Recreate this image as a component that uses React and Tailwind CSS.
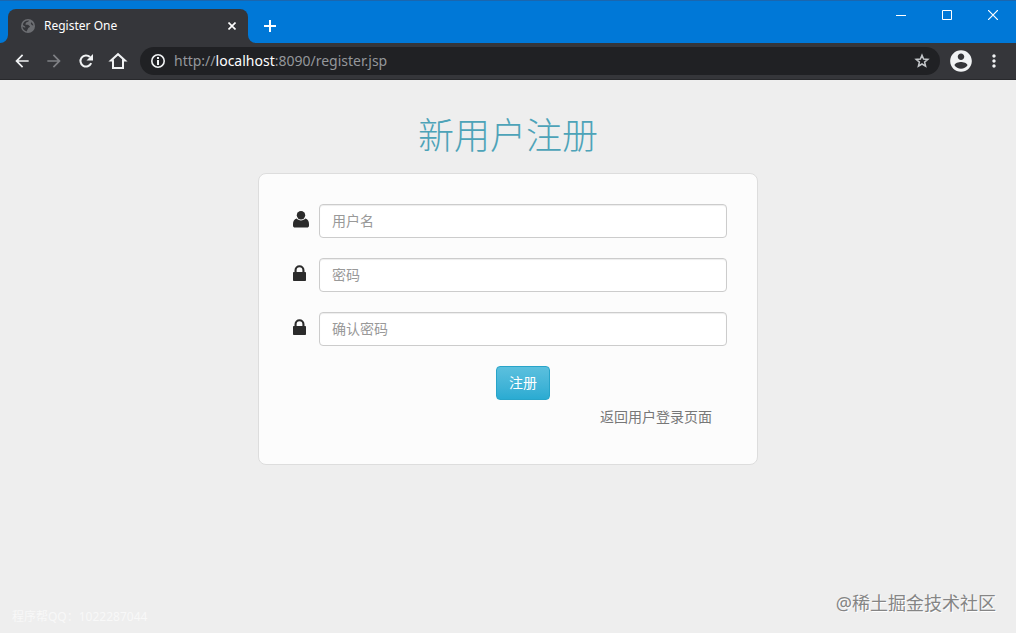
import { useState } from 'react'
import { MdArrowBack, MdArrowForward, MdMoreVert } from 'react-icons/md'

const FIELDS = [
  { id: 'username', label: '用户名', type: 'text', icon: UserIcon },
  { id: 'password', label: '密码', type: 'password', icon: LockIcon },
  { id: 'confirm', label: '确认密码', type: 'password', icon: LockIcon },
]

function UserIcon() {
  return (
    <svg width="18" height="18" viewBox="0 0 18 18" fill="currentColor" aria-hidden="true">
      <circle cx="9" cy="4.200" r="4.200" />
      <path d="M4.600 7.500C2.200 8.200 1 10 1 13v1.400C1 15.800 1.800 16.500 3 16.500h12c1.200 0 2-.7 2-2.100V13c0-3-1.200-4.800-3.600-5.500-.9 1.100-2.500 1.900-4.400 1.900s-3.500-.8-4.400-1.900z" />
    </svg>
  )
}

function LockIcon() {
  return (
    <svg width="18" height="18" viewBox="0 0 18 18" fill="currentColor" aria-hidden="true">
      <path d="M2.500 7V5.200a5 5 0 0 1 10 0V7h.7c.5 0 .8.300.8.800v7.400c0 .5-.3.800-.8.800H1.800c-.5 0-.8-.3-.8-.8V7.800c0-.5.300-.8.800-.8zM4.600 7h5.800V5.200a2.900 2.900 0 0 0-5.800 0z" />
    </svg>
  )
}

function GlobeIcon() {
  return (
    <svg width="16" height="16" viewBox="0 0 16 16" aria-hidden="true">
      <circle cx="8" cy="8" r="7" fill="#6c6e72" />
      <path fill="#35363a" d="M9 2.500c-.3 1.300-1.500 1.600-2.600 1.800-.3 1-1.200 1.300-1 2.100.8.400 2.400-.2 3.100.7.300.8 1.400.9 1.500 1.700-.5.800-1.700.8-2 1.700-.2 1-1 1.600-1.200 2.900-2.400-.4-4.200-2.400-4.400-4.900 1 .4 1.900 1.200 3 1 .3-.9-.8-1.500-1.700-1.800-.5-.4-.9-.8-.8-1.400C3.600 4 5.900 2.200 9 2.500zM11.300 4.200c1.100.8 1.900 1.900 2.100 3.200-.8.300-1.900-.2-2.100-1.100-.6-.6-.7-1.600 0-2.100z" />
    </svg>
  )
}

function ReloadIcon() {
  return (
    <svg width="20" height="20" viewBox="0 0 20 20" fill="none" aria-hidden="true">
      <path d="M15.200 12.200A5.600 5.600 0 1 1 14 6" stroke="currentColor" strokeWidth="2" />
      <path d="M17 3v6.500h-6.500z" fill="currentColor" />
    </svg>
  )
}

function HomeIcon() {
  return (
    <svg width="20" height="20" viewBox="0 0 20 20" fill="none" stroke="currentColor" strokeWidth="2" aria-hidden="true">
      <path d="M5 9.500V17h10V9.500h2L10 3.200 3 9.500h2.800" />
    </svg>
  )
}

function InfoIcon() {
  return (
    <svg width="16" height="16" viewBox="0 0 16 16" fill="none" stroke="currentColor" aria-hidden="true">
      <circle cx="8" cy="8" r="6.200" strokeWidth="1.600" />
      <path d="M8 7v5M8 4v2" strokeWidth="2" />
    </svg>
  )
}

function StarIcon() {
  return (
    <svg width="16" height="16" viewBox="0 0 16 16" fill="none" stroke="currentColor" strokeWidth="1.500" aria-hidden="true">
      <path d="M8 2.200l1.600 3.900 4.200.3-3.200 2.700 1 4.100L8 11l-3.600 2.200 1-4.100-3.200-2.700 4.200-.3z" />
    </svg>
  )
}

function AvatarIcon() {
  return (
    <svg width="26" height="26" viewBox="0 0 24 24" fill="currentColor" aria-hidden="true">
      <path d="M12 2C6.480 2 2 6.480 2 12s4.480 10 10 10 10-4.480 10-10S17.520 2 12 2zm0 3c1.660 0 3 1.340 3 3s-1.340 3-3 3-3-1.340-3-3 1.340-3 3-3zm0 14.200c-2.500 0-4.710-1.280-6-3.220.030-1.990 4-3.080 6-3.080 1.990 0 5.970 1.090 6 3.080-1.290 1.940-3.500 3.220-6 3.220z" />
    </svg>
  )
}

function TitleBar() {
  return (
    <div className="flex h-[43px] items-start justify-between border-t border-[#1b66ae] bg-[#0078d7] text-white">
      <div className="flex items-end self-stretch">
        <svg width="8" height="8" viewBox="0 0 8 8" className="fill-[#35363a]" aria-hidden="true">
          <path d="M8 0v8H0a8 8 0 0 0 8-8z" />
        </svg>
        <div className="flex h-[34px] w-60 items-center gap-2 rounded-t-lg bg-[#35363a] pr-2 pl-3 text-xs">
          <GlobeIcon />
          <span className="flex-1">Register One</span>
          <button type="button" aria-label="Close tab" className="flex size-4 items-center justify-center">
            <svg width="8" height="8" viewBox="0 0 8 8" stroke="currentColor" strokeWidth="1.600" aria-hidden="true">
              <path d="M.5.500l7 7M7.500.500l-7 7" />
            </svg>
          </button>
        </div>
        <svg width="8" height="8" viewBox="0 0 8 8" className="fill-[#35363a]" aria-hidden="true">
          <path d="M0 0v8h8a8 8 0 0 1-8-8z" />
        </svg>
        <button type="button" aria-label="New tab" className="flex h-[34px] w-7 items-center justify-center">
          <svg width="12" height="12" viewBox="0 0 12 12" stroke="currentColor" strokeWidth="2" aria-hidden="true">
            <path d="M6 0v12M0 6h12" />
          </svg>
        </button>
      </div>
      <div className="flex">
        <button type="button" aria-label="Minimize" className="flex h-7 w-[46px] items-center justify-center">
          <svg width="10" height="10" viewBox="0 0 10 10" stroke="currentColor" aria-hidden="true">
            <path d="M0 5.500h10" />
          </svg>
        </button>
        <button type="button" aria-label="Maximize" className="flex h-7 w-[46px] items-center justify-center">
          <svg width="10" height="10" viewBox="0 0 10 10" fill="none" stroke="currentColor" aria-hidden="true">
            <path d="M.5.500h9v9h-9z" />
          </svg>
        </button>
        <button type="button" aria-label="Close" className="flex h-7 w-[46px] items-center justify-center">
          <svg width="10" height="10" viewBox="0 0 10 10" stroke="currentColor" strokeWidth="1.200" aria-hidden="true">
            <path d="M0 0l10 10M10 0L0 10" />
          </svg>
        </button>
      </div>
    </div>
  )
}

function Toolbar() {
  return (
    <div className="flex h-[37px] items-center border-b border-[#28292c] bg-[#35363a] px-3 text-[#f1f3f4]">
      <div className="flex gap-3">
        <button type="button" aria-label="Back"><MdArrowBack size={20} /></button>
        <button type="button" aria-label="Forward" className="text-[#7f8185]"><MdArrowForward size={20} /></button>
        <button type="button" aria-label="Reload"><ReloadIcon /></button>
        <button type="button" aria-label="Home"><HomeIcon /></button>
      </div>
      <div className="ml-3 flex h-7 flex-1 items-center gap-2 rounded-full bg-[#202124] px-2.5 text-sm">
        <InfoIcon />
        <span className="flex-1 text-[#94979b]">
          http://<span className="text-white">localhost</span>:8090/register.jsp
        </span>
        <button type="button" aria-label="Bookmark" className="text-[#c4c7ca]"><StarIcon /></button>
      </div>
      <button type="button" aria-label="Profile" className="ml-2"><AvatarIcon /></button>
      <button type="button" aria-label="Menu" className="ml-2.5"><MdMoreVert size={20} /></button>
    </div>
  )
}

function RegisterForm() {
  const [values, setValues] = useState({ username: '', password: '', confirm: '' })

  const handleChange = (e) => {
    const { id, value } = e.target
    setValues(prev => ({ ...prev, [id]: value }))
  }

  return (
    <form
      onSubmit={e => e.preventDefault()}
      className="mx-auto w-full max-w-[500px] rounded-lg border border-[#dddddd] bg-[#fcfcfc] px-[30px] pt-[30px] pb-9"
    >
      <div className="flex flex-col gap-5">
        {FIELDS.map(({ id, label, type, icon: Icon }) => (
          <div key={id} className="flex items-center">
            <label htmlFor={id} aria-label={label} className="w-[30px] pb-0.5 pl-[3px] text-[#2b2b2b]">
              <Icon />
            </label>
            <input
              id={id}
              type={type}
              placeholder={label}
              value={values[id]}
              onChange={handleChange}
              className="h-[34px] min-w-0 flex-1 rounded border border-[#cccccc] bg-white px-3 pb-0.5 text-sm text-[#555555] shadow-[inset_0_1px_1px_rgba(0,0,0,0.075)] outline-none placeholder:text-[#999999]"
            />
          </div>
        ))}
      </div>
      <div className="mt-5 flex flex-col pl-[30px]">
        <button
          type="submit"
          className="h-[34px] self-center rounded border border-[#28a4c9] bg-linear-to-b from-[#5bc0de] to-[#2aabd2] px-3 text-sm text-white"
        >
          注册
        </button>
        <a href="#login" className="mt-[7px] mr-[15px] mb-px self-end text-sm text-[#777777]">返回用户登录页面</a>
      </div>
    </form>
  )
}

export default function App() {
  return (
    <div className="flex min-h-screen flex-col bg-[#eeeeee] font-['Noto_Sans','Noto_Sans_CJK_SC',sans-serif]">
      <TitleBar />
      <Toolbar />
      <main className="flex flex-1 flex-col">
        <h1 className="mt-[34px] mb-[15px] text-center text-4xl leading-[44px] font-light text-[#4da3b8]">新用户注册</h1>
        <RegisterForm />
      </main>
      <footer className="flex items-end justify-between pr-5 pb-2 pl-3">
        <span className="text-xs text-[#f8f8f8]">程序帮QQ：1022287044</span>
        <span className="pb-2 text-lg text-[#858585] [text-shadow:1px_1px_0_#ffffff]">@稀土掘金技术社区</span>
      </footer>
    </div>
  )
}
